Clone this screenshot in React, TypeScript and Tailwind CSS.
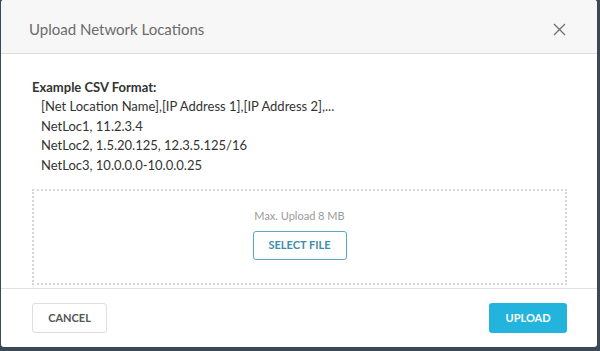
import React from "react";

export default function App() {
  return (
    <div className="w-[600px] h-[351px] bg-[#3b4955] pl-[1px] pr-[3px] pb-[4px] flex" style={{ fontFamily: "Lato, 'Open Sans', sans-serif" }}>
      <div className="flex-1 bg-white rounded-[3px] flex flex-col overflow-hidden">
        <div className="h-[54px] bg-[#f7f7f7] border-b border-[#dcdcdc] flex items-start justify-between pl-[28px] pr-[31px] pt-[19px] shrink-0">
          <div className="text-[15px] text-[#6b6b6b] leading-[20px]">Upload Network Locations</div>
          <svg width="13" height="13" viewBox="0 0 13 13" className="mt-[4px]">
            <path d="M1 1 L12 12 M12 1 L1 12" stroke="#707070" strokeWidth="1.3" fill="none" />
          </svg>
        </div>
        <div className="flex-1 overflow-hidden pl-[31px] pr-[30px] pt-[24px]">
          <div className="text-[13px] font-bold text-[#333] leading-[19px]">Example CSV Format:</div>
          <div className="pl-[9px] text-[13px] text-[#333] leading-[19.5px]">
            <div>[Net Location Name],[IP Address 1],[IP Address 2],...</div>
            <div>NetLoc1, 11.2.3.4</div>
            <div>NetLoc2, 1.5.20.125, 12.3.5.125/16</div>
            <div>NetLoc3, 10.0.0.0-10.0.0.25</div>
          </div>
          <div className="mt-[14px] border-2 border-dotted border-[#d6d6d6] h-[96px] flex flex-col items-center pt-[18px]">
            <div className="text-[11px] text-[#9a9a9a] leading-[14px]">Max. Upload 8 MB</div>
            <button className="mt-[8px] w-[94px] h-[29px] border border-[#5aa8c2] rounded-[3px] text-[11px] font-bold text-[#3d8dab] bg-white">SELECT FILE</button>
          </div>
        </div>
        <div className="h-[59px] border-t border-[#e2e2e2] flex items-start justify-between pl-[31px] pr-[30px] pt-[14px] shrink-0">
          <button className="w-[75px] h-[30px] border border-[#dedede] rounded-[3px] text-[11px] font-bold text-[#555] bg-white">CANCEL</button>
          <button className="w-[78px] h-[30px] rounded-[3px] text-[11px] font-bold text-white bg-[#22b4dc]">UPLOAD</button>
        </div>
      </div>
    </div>
  );
}
